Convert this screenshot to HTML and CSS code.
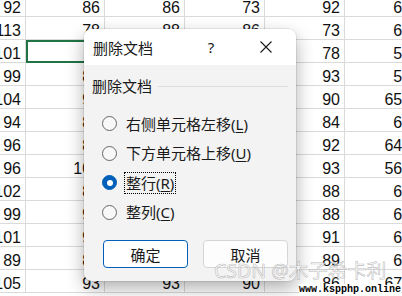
FILE: index.html
```html
<!DOCTYPE html>
<html lang="zh-CN">
<head>
<meta charset="UTF-8" />
<title>删除文档</title>
<link rel="stylesheet" href="styles.css">
</head>
<body>

<div class="sheet">
  <div class="cell">92</div><div class="cell">86</div><div class="cell">86</div><div class="cell">73</div><div class="cell">92</div><div class="cell">618</div>
  <div class="cell">113</div><div class="cell">78</div><div class="cell">88</div><div class="cell">86</div><div class="cell">73</div><div class="cell">634</div>
  <div class="cell">101</div><div class="cell selected"></div><div class="cell">90</div><div class="cell">85</div><div class="cell">78</div><div class="cell">587</div>
  <div class="cell">99</div><div class="cell">88</div><div class="cell">92</div><div class="cell">80</div><div class="cell">93</div><div class="cell">559</div>
  <div class="cell">104</div><div class="cell">91</div><div class="cell">87</div><div class="cell">79</div><div class="cell">90</div><div class="cell">6523</div>
  <div class="cell">94</div><div class="cell">85</div><div class="cell">90</div><div class="cell">88</div><div class="cell">84</div><div class="cell">621</div>
  <div class="cell">96</div><div class="cell">89</div><div class="cell">85</div><div class="cell">90</div><div class="cell">92</div><div class="cell">6457</div>
  <div class="cell">96</div><div class="cell">100</div><div class="cell">91</div><div class="cell">87</div><div class="cell">93</div><div class="cell">5671</div>
  <div class="cell">102</div><div class="cell">88</div><div class="cell">92</div><div class="cell">91</div><div class="cell">88</div><div class="cell">640</div>
  <div class="cell">99</div><div class="cell">90</div><div class="cell">89</div><div class="cell">85</div><div class="cell">88</div><div class="cell">633</div>
  <div class="cell">101</div><div class="cell">92</div><div class="cell">88</div><div class="cell">84</div><div class="cell">91</div><div class="cell">628</div>
  <div class="cell">89</div><div class="cell">87</div><div class="cell">86</div><div class="cell">82</div><div class="cell">89</div><div class="cell">615</div>
  <div class="cell">105</div><div class="cell">93</div><div class="cell">93</div><div class="cell">90</div><div class="cell">86</div><div class="cell">6752</div>
</div>

<div class="dialog">
  <div class="titlebar">
    <span class="title">删除文档</span>
    <span class="help">?</span>
    <span class="close">
      <svg width="12" height="12" viewBox="0 0 12 12"><path d="M0.5 0.5 L11.5 11.5 M11.5 0.5 L0.5 11.5" stroke="#1a1a1a" stroke-width="1.1" fill="none"/></svg>
    </span>
  </div>
  <div class="dialog-body">
    <div class="group-head">
      <span>删除文档</span>
      <span class="group-line"></span>
    </div>
    <div class="options">
      <div class="option"><span class="radio"></span><span class="label">右侧单元格左移(<u>L</u>)</span></div>
      <div class="option"><span class="radio"></span><span class="label">下方单元格上移(<u>U</u>)</span></div>
      <div class="option"><span class="radio checked"></span><span class="label focus">整行(<u>R</u>)</span></div>
      <div class="option"><span class="radio"></span><span class="label">整列(<u>C</u>)</span></div>
    </div>
    <div class="buttons">
      <button class="btn primary">确定</button>
      <button class="btn">取消</button>
    </div>
  </div>
</div>

<div class="watermark">CSDN @木子希卡利</div>
<div class="site-mark">www.kspphp.online</div>

</body>
</html>
```

FILE: styles.css
```css
* {
  box-sizing: border-box;
}
body {
  margin: 0;
  width: 402px;
  height: 296px;
  overflow: hidden;
  background: #fff;
  position: relative;
}

/* Tablo */
.sheet {
  display: grid;
  grid-template-columns: 26px 79px 80px 80px 80px 80px;
  grid-auto-rows: 23px;
  margin-top: -6px;
  font-family: "Liberation Sans", Arial, sans-serif;
  font-size: 16px;
  color: #111;
}
.cell {
  border-right: 1px solid #dadada;
  border-bottom: 1px solid #dadada;
  padding: 5px 4px 0 0;
  line-height: 17px;
  text-align: right;
  white-space: nowrap;
  overflow: hidden;
  direction: rtl;
}
.cell.selected {
  outline: 2px solid #217346;
  outline-offset: -2px;
}

/* Pencere */
.dialog {
  position: absolute;
  left: 84px;
  top: 29px;
  width: 212px;
  height: 252px;
  border-radius: 8px;
  background: #f3f3f3;
  box-shadow: 0 7px 18px rgba(0, 0, 0, 0.32), 0 0 0 1px rgba(0, 0, 0, 0.07);
  overflow: hidden;
  display: flex;
  flex-direction: column;
  font-family: "Noto Sans", "Noto Sans CJK SC", sans-serif;
  font-size: 15px;
  color: #1a1a1a;
}
.titlebar {
  height: 36px;
  flex-shrink: 0;
  background: #fff;
  display: flex;
  align-items: center;
  padding-left: 9px;
}
.title {
  flex: 1;
}
.help {
  width: 20px;
  text-align: center;
  margin-right: 29px;
}
.close {
  width: 32px;
  display: flex;
  justify-content: center;
  margin-right: 14px;
}

.dialog-body {
  flex: 1;
  padding: 11px 8px 0;
  display: flex;
  flex-direction: column;
}
.group-head {
  display: flex;
  align-items: center;
  gap: 6px;
  line-height: 20px;
}
.group-line {
  flex: 1;
  height: 1px;
  background: #dcdcdc;
}
.options {
  margin-top: 13px;
  padding-left: 10px;
}
.option {
  height: 29.5px;
  display: flex;
  align-items: center;
  gap: 10px;
}
.radio {
  width: 15px;
  height: 15px;
  border: 1px solid #666;
  border-radius: 50%;
  background: #f8f8f8;
  flex-shrink: 0;
  display: flex;
  justify-content: center;
  align-items: center;
}
.radio.checked {
  border-color: #005fb8;
  background: #005fb8;
}
.radio.checked::after {
  content: "";
  width: 6px;
  height: 6px;
  border-radius: 50%;
  background: #fff;
}
.label {
  line-height: 20px;
  padding: 0 1px;
  border: 1px solid transparent;
  margin-left: -3px;
}
.label.focus {
  border: 1px dotted #000;
}
.label u {
  text-underline-offset: 2px;
}

.buttons {
  margin-top: 13px;
  padding-left: 11px;
  display: flex;
  gap: 15px;
}
.btn {
  width: 85px;
  height: 28px;
  border: 1px solid #d6d6d6;
  border-radius: 4px;
  background: #fdfdfd;
  font-family: "Noto Sans", "Noto Sans CJK SC", sans-serif;
  font-size: 15px;
  color: #1a1a1a;
  padding: 0;
}
.btn.primary {
  border-color: #005fb8;
  background: #fff;
}

/* Filigranlar */
.watermark {
  position: absolute;
  left: 214px;
  top: 259px;
  font-family: "Noto Sans", "Noto Sans CJK SC", sans-serif;
  font-size: 19.5px;
  line-height: 24px;
  color: rgba(255, 255, 255, 0.7);
  -webkit-text-stroke: 0.6px rgba(120, 120, 120, 0.5);
  white-space: nowrap;
}
.site-mark {
  position: absolute;
  left: 299px;
  top: 284px;
  font-family: "Liberation Mono", monospace;
  font-size: 10px;
  font-weight: bold;
  line-height: 12px;
  background: #fff;
  color: #000;
  white-space: nowrap;
}
```
